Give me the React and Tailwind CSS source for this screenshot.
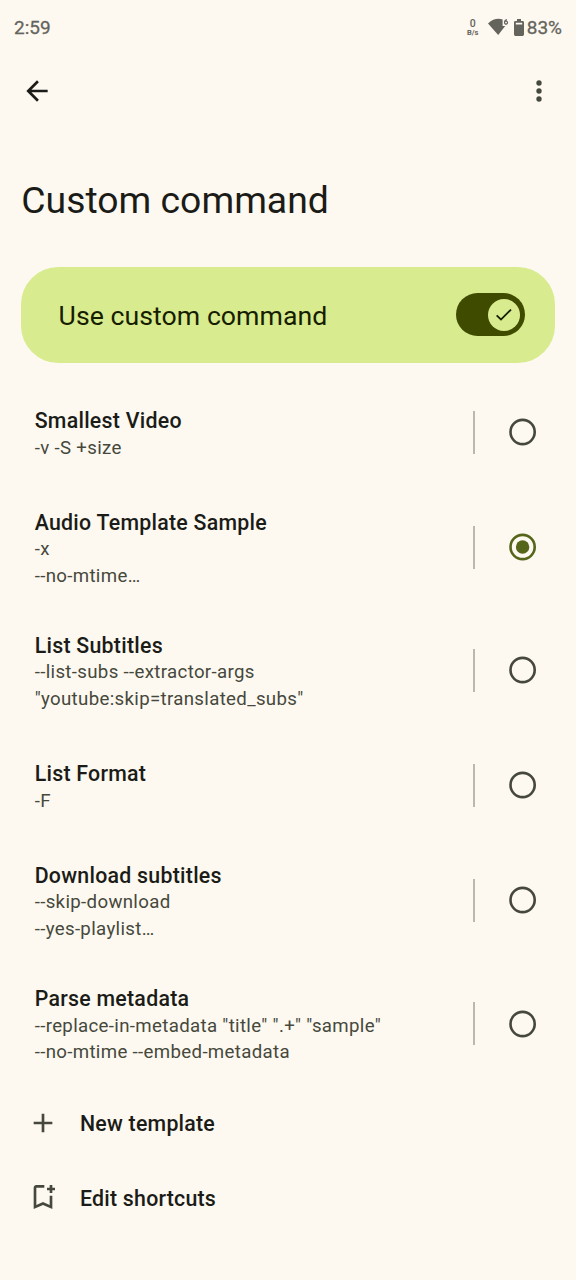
import React from "react";

const templates = [
  { name: "Smallest Video", lines: ["-v -S +size"] },
  { name: "Audio Template Sample", lines: ["-x", "--no-mtime…"], selected: true },
  { name: "List Subtitles", lines: ["--list-subs --extractor-args", '"youtube:skip=translated_subs"'] },
  { name: "List Format", lines: ["-F"] },
  { name: "Download subtitles", lines: ["--skip-download", "--yes-playlist…"] },
  { name: "Parse metadata", lines: ['--replace-in-metadata "title" ".+" "sample"', "--no-mtime --embed-metadata"] },
];

function StatusBar() {
  return (
    <div className="flex h-[53px] items-center justify-between pl-[14px] pr-[14px] pt-[2px] text-[#65645c]">
      <span className="text-[19px] leading-6 [-webkit-text-stroke:0.3px_currentColor]">2:59</span>
      <div className="flex items-center">
        <div className="flex w-[14px] flex-col items-center font-medium leading-none">
          <span className="text-[10.5px] leading-[10px]">0</span>
          <span className="text-[7.5px] font-bold leading-[8px]">B/s</span>
        </div>
        <svg className="ml-[8px] h-[20px] w-[22px]" viewBox="0 0 22 20" fill="currentColor">
          <path d="M0 5.4C5 .6 10.5 .2 14.6 1.5V8H17.2L10.2 17Z" />
          <path d="M18.9 1.6Q16.5 2 16.5 4.6A1.5 1.5 0 1 0 17.4 3.2" fill="none" stroke="currentColor" strokeWidth="1.2" />
        </svg>
        <svg className="ml-[4px] h-[18px] w-[10px]" viewBox="0 0 10 18" fill="currentColor">
          <path fillRule="evenodd" d="M3 0H7V2H8.6Q10 2 10 3.4V15.6Q10 17 8.6 17H1.4Q0 17 0 15.6V3.4Q0 2 1.4 2H3ZM1.8 3.7V5.5H8.2V3.7Z" />
        </svg>
        <span className="ml-[3px] text-[19px] leading-6 [-webkit-text-stroke:0.3px_currentColor]">83%</span>
      </div>
    </div>
  );
}

function Radio({ selected }) {
  return (
    <svg
      className={selected ? "h-[28px] w-[28px] shrink-0 text-[#55651a]" : "h-[28px] w-[28px] shrink-0 text-[#46483c]"}
      viewBox="0 0 28 28"
      fill="none"
    >
      <circle cx="13.6" cy="14" r="12.1" stroke="currentColor" strokeWidth="2.6" />
      {selected && <circle cx="13.6" cy="14" r="6.7" fill="currentColor" />}
    </svg>
  );
}

function TemplateRow({ name, lines, selected }) {
  return (
    <li className={`flex items-center pl-[34.7px] pr-[39.5px] ${lines.length > 1 ? "h-[123.3px]" : "h-[106.7px]"}`}>
      <div className="min-w-0 flex-1 pt-[5px]">
        <div className="text-[21.33px] font-medium leading-[26.67px] tracking-[0.26px] text-[#1b1c17]">{name}</div>
        {lines.map((line) => (
          <div key={line} className="whitespace-nowrap text-[18.67px] leading-[26.67px] tracking-[0.33px] text-[#46483c]">
            {line}
          </div>
        ))}
      </div>
      <span className="mr-[33.5px] h-[43px] w-[2px] shrink-0 bg-[#bab9b0]" />
      <Radio selected={selected} />
    </li>
  );
}

function ActionRow({ icon, label }) {
  return (
    <div className="flex h-[74.67px] items-center gap-[21.3px] pl-[26.7px]">
      {icon}
      <span className="pt-[3px] text-[21.33px] font-medium leading-8 tracking-[0.23px] text-[#1b1c17]">{label}</span>
    </div>
  );
}

export default function App() {
  return (
    <main className="h-[1280px] w-[576px] overflow-hidden bg-[#fdf9f1] font-[Roboto,sans-serif]">
      <StatusBar />
      <header className="flex h-[75px] items-center justify-between pl-[21.3px] pr-[21.3px]">
        <svg className="h-8 w-8 text-[#1b1c17]" viewBox="0 0 24 24" fill="currentColor">
          <path d="M20 11H7.83l5.59-5.59L12 4l-8 8 8 8 1.41-1.41L7.83 13H20v-2z" />
        </svg>
        <svg className="h-8 w-8 text-[#46483c]" viewBox="0 0 24 24" fill="currentColor">
          <circle cx="12" cy="6" r="2" />
          <circle cx="12" cy="12" r="2" />
          <circle cx="12" cy="18" r="2" />
        </svg>
      </header>
      <h1 className="mt-[48px] pl-[21.3px] text-[37.33px] leading-[48px] text-[#1b1c17]">Custom command</h1>
      <div className="mx-[21.3px] mt-[43px] flex h-[96px] items-center justify-between rounded-[37.3px] bg-[#d8eb8f] pl-[37.3px] pr-[29.5px]">
        <span className="pt-[2px] text-[26.67px] leading-8 tracking-[0.04px] text-[#171e00]">Use custom command</span>
        <div className="mb-[1px] flex h-[43px] w-[69.3px] items-center justify-end rounded-full bg-[#3f4c00] pr-[5.3px]">
          <div className="flex h-8 w-8 items-center justify-center rounded-full bg-[#d8eb8f]">
            <svg className="h-[21.3px] w-[21.3px] text-[#171e00]" viewBox="0 0 24 24" fill="currentColor">
              <path d="M9 16.17 4.83 12l-1.42 1.41L9 19 21 7l-1.41-1.41z" />
            </svg>
          </div>
        </div>
      </div>
      <ul className="mt-[15.7px]">
        {templates.map((t) => (
          <TemplateRow key={t.name} {...t} />
        ))}
      </ul>
      <ActionRow
        label="New template"
        icon={
          <svg className="h-8 w-8 text-[#46483c]" viewBox="0 0 24 24" fill="currentColor">
            <path d="M19 13h-6v6h-2v-6H5v-2h6V5h2v6h6v2z" />
          </svg>
        }
      />
      <ActionRow
        label="Edit shortcuts"
        icon={
          <svg className="h-8 w-8 text-[#46483c]" viewBox="0 0 24 24" fill="currentColor">
            <path d="M17 11v6.97l-5-2.14-5 2.14V5h6V3H7c-1.1 0-2 .9-2 2v16l7-3 7 3V11h-2zM21 7h-2v2h-2V7h-2V5h2V3h2v2h2v2z" />
          </svg>
        }
      />
    </main>
  );
}
